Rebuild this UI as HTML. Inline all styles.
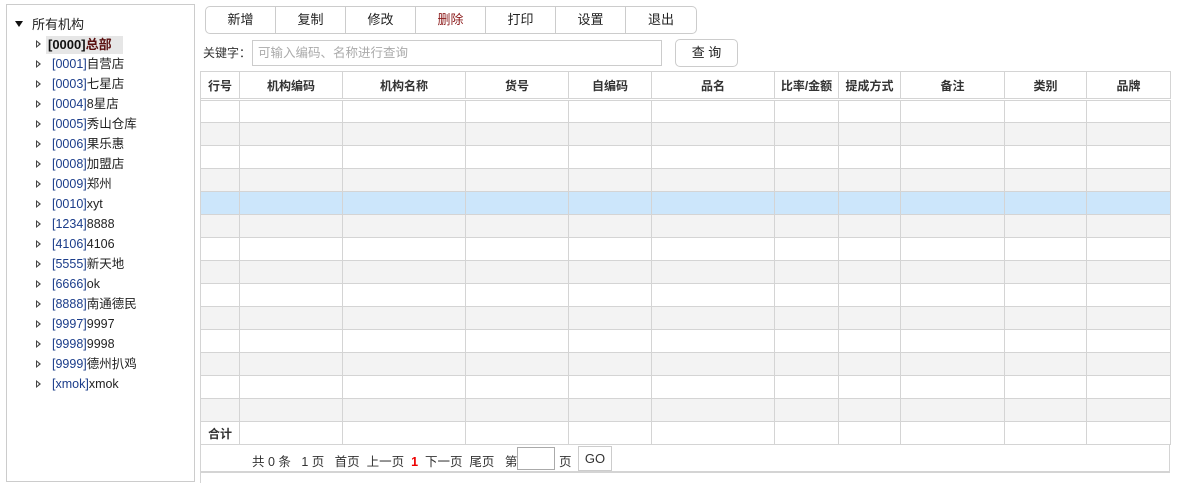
<!DOCTYPE html><html><head><meta charset="utf-8"><style>
*{box-sizing:border-box;margin:0;padding:0}
html,body{width:1177px;height:483px;overflow:hidden}
body{background:#fff;font-family:"Liberation Sans","Noto Sans CJK SC",sans-serif;font-size:12px;color:#333;position:relative}
.abs{position:absolute}
#left{left:6px;top:4px;width:189px;height:478px;border:1px solid #ccc}
.ti{position:absolute;left:52px;height:20px;line-height:20px;font-size:12.5px;color:#222;white-space:nowrap}
.ti b{font-weight:normal;color:#1a3c8a}
.tri{position:absolute;left:36px;width:0;height:0;border-top:4px solid transparent;border-bottom:4px solid transparent;border-left:5px solid #444}
.tri:after{content:"";position:absolute;left:-4px;top:-2px;border-top:2px solid transparent;border-bottom:2px solid transparent;border-left:2.5px solid #fff}
#tb{left:205px;top:6px;height:28px;border:1px solid #ccc;border-radius:5px;display:flex;overflow:hidden}
#tb div{width:70px;border-right:1px solid #ccc;text-align:center;line-height:26px;font-size:13px;color:#222}
#tb div:last-child{border-right:none}
table{position:absolute;left:200px;top:71px;border-collapse:collapse;table-layout:fixed}
td,th{border:1px solid #d4d4d4;height:23px;padding:0}
th{height:28px;font-weight:bold;font-size:12px;color:#333;border-bottom:3px double #d4d4d4}
tr.g td{background:#f3f3f3}
tr.s td{background:#cce6fb}
</style></head><body>
<div id="left" class="abs"></div>
<div class="abs" style="left:15px;top:21px;border-left:4.5px solid transparent;border-right:4.5px solid transparent;border-top:6px solid #111"></div>
<div class="abs" style="left:32px;top:16px;line-height:18px;font-size:13px;color:#222">所有机构</div>
<div class="abs" style="left:46px;top:36px;width:77px;height:18px;background:#e6e6e6"></div>
<div class="ti" style="top:35px;left:48px;font-weight:bold;color:#111;font-size:13px">[0000]<span style="color:#5a1010">总部</span></div>
<div id="tree"></div>
<div id="tb" class="abs"><div>新增</div><div>复制</div><div>修改</div><div style="color:#8b1a1a">删除</div><div>打印</div><div>设置</div><div>退出</div></div>
<div class="abs" style="left:203px;top:44px;font-size:12px;color:#333">关键字：</div>
<div class="abs" style="left:252px;top:40px;width:410px;height:26px;border:1px solid #ccc;color:#aaa;font-size:12.5px;line-height:24px;padding-left:5px">可输入编码、名称进行查询</div>
<div class="abs" style="left:675px;top:39px;width:63px;height:28px;border:1px solid #ccc;border-radius:5px;text-align:center;line-height:26px;font-size:13px;color:#222">查 询</div>
<div class="abs" style="left:200px;top:97px;width:1px;height:386px;background:#d4d4d4"></div>
<div class="abs" style="left:200px;top:472px;width:970px;height:1px;background:#d4d4d4"></div>
<table id="t"></table>
<div class="abs" style="left:200px;top:444px;width:970px;height:28px;border:1px solid #d4d4d4;border-top:none"></div>
<div class="abs" style="left:252px;top:451px;font-size:12.5px;color:#333;white-space:pre">共 0 条   1 页   首页  上一页  <b style="color:#e00">1</b>  下一页  尾页   第</div>
<div class="abs" style="left:517px;top:447px;width:38px;height:23px;border:1px solid #aaa"></div>
<div class="abs" style="left:559px;top:451px;font-size:12.5px">页</div>
<div class="abs" style="left:578px;top:446px;width:34px;height:25px;border:1px solid #ccc;text-align:center;line-height:23px;font-size:13px">GO</div>
<script>
var items=["[0001]|自营店","[0003]|七星店","[0004]|8星店","[0005]|秀山仓库","[0006]|果乐惠","[0008]|加盟店","[0009]|郑州","[0010]|xyt","[1234]|8888","[4106]|4106","[5555]|新天地","[6666]|ok","[8888]|南通德民","[9997]|9997","[9998]|9998","[9999]|德州扒鸡","[xmok]|xmok"];
var h='<div class="tri" style="top:40px"></div>';
items.forEach(function(s,i){var p=s.split('|'),y=54+i*20;h+='<div class="tri" style="top:'+(y+6)+'px"></div><div class="ti" style="top:'+y+'px"><b>'+p[0]+'</b>'+p[1]+'</div>';});
document.getElementById('tree').innerHTML=h;
var cols=[200,239,342,465,568,651,774,838,900,1004,1086,1170];
var hd=["行号","机构编码","机构名称","货号","自编码","品名","比率/金额","提成方式","备注","类别","品牌"];
var t='<colgroup>';for(var i=0;i<11;i++)t+='<col style="width:'+(cols[i+1]-cols[i])+'px">';t+='</colgroup><tr>';
hd.forEach(function(x){t+='<th>'+x+'</th>'});t+='</tr>';
for(var r=0;r<14;r++){t+='<tr class="'+(r==4?'s':(r%2?'g':''))+'">';for(var c=0;c<11;c++)t+='<td></td>';t+='</tr>';}
t+='<tr><td style="font-weight:bold;text-align:center">合计</td>';for(var c=0;c<10;c++)t+='<td></td>';t+='</tr>';
document.getElementById('t').innerHTML=t;
</script>
</body></html>
